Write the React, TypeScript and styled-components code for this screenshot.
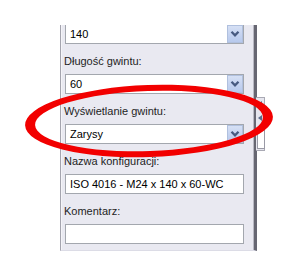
import React from 'react';
import styled, {createGlobalStyle} from "styled-components";

const GlobalStyle = createGlobalStyle`
  html, body {
    margin: 0;
    padding: 0;
    background: #ffffff;
  }
  * {
    box-sizing: border-box;
  }
`

const Page = styled.div`
  position: relative;
  width: 294px;
  height: 274px;
  overflow: hidden;
  background: #ffffff;
  padding-top: 25px;
  padding-left: 60px;
`

const Panel = styled.div`
  width: 197px;
  height: 226px;
  overflow: hidden;
  background: #e9e9f1;
  border-left: 1px solid #a4a4ae;
  border-right: 3px solid #676772;
  border-bottom: 1px solid #dcdce6;
  box-shadow: inset 1px 0 0 #f4f4f8, inset -1px 0 0 #b9b9c3;
  padding: 0 10px 0 4px;
  display: flex;
  flex-direction: column;
  font-family: "Liberation Sans", Arial, sans-serif;
  font-size: 11px;
  color: #1e1e1e;
`

const Label = styled.div`
  margin-left: -1px;
  padding-top: 10px;
  height: 30px;
  line-height: 14px;
`

const Field = styled.div<{$first?: boolean, $combo?: boolean}>`
  flex: none;
  height: 20px;
  margin-top: ${p => (p.$first ? '-1px' : '0')};
  background: #ffffff;
  border: 1px solid #a3a7ae;
  display: flex;
  align-items: center;
  padding-left: 4px;
  padding-right: ${p => (p.$combo ? '0' : '4px')};
  color: #000000;
`

const FieldText = styled.span`
  flex: 1;
  white-space: nowrap;
`

const DropButton = styled.div`
  flex: none;
  width: 16px;
  height: 18px;
  background: linear-gradient(#d6e0f5, #b7c9ed);
  border: 1px solid #b0c0de;
  display: flex;
  align-items: center;
  justify-content: center;
`

const Handle = styled.div`
  position: absolute;
  left: 256px;
  top: 97px;
  width: 9px;
  height: 54px;
  background: #e6e6ee;
  border: 1px solid #a9a9b4;
  border-left: none;
  display: flex;
  flex-direction: column;
  align-items: center;
  padding-top: 3px;
  gap: 8px;
`

const HandleArrow = styled.div`
  width: 0;
  height: 0;
  border-top: 3px solid transparent;
  border-bottom: 3px solid transparent;
  border-right: 4px solid #5a6a8a;
`

const HandleBox = styled.div`
  width: 8px;
  height: 20px;
  background: #ffffff;
  border: 1px solid #9a9aa6;
  margin-left: 1px;
`

const Overlay = styled.svg`
  position: absolute;
  left: 0;
  top: 0;
  pointer-events: none;
`

const Chevron: React.FC = () => (
    <svg width="10" height="8" viewBox="0 0 10 8">
        <polyline points="1.5,1.8 5,5.3 8.5,1.8" fill="none" stroke="#475a80" strokeWidth="2.3"/>
    </svg>
)

const Combo: React.FC<{value: string, first?: boolean}> = ({value, first}) => (
    <Field $first={first} $combo>
        <FieldText>{value}</FieldText>
        <DropButton><Chevron/></DropButton>
    </Field>
)

const App: React.FC = () => {
    return (
        <Page>
            <GlobalStyle/>
            <Panel>
                <Combo value="140" first/>
                <Label>Długość gwintu:</Label>
                <Combo value="60"/>
                <Label>Wyświetlanie gwintu:</Label>
                <Combo value="Zarysy"/>
                <Label>Nazwa konfiguracji:</Label>
                <Field><FieldText>ISO 4016 - M24 x 140 x 60-WC</FieldText></Field>
                <Label>Komentarz:</Label>
                <Field/>
            </Panel>
            <Handle>
                <HandleArrow/>
                <HandleArrow/>
                <HandleBox/>
            </Handle>
            <Overlay width="294" height="274" viewBox="0 0 294 274">
                <g transform="rotate(-2 149 121)">
                    <path
                        fillRule="evenodd"
                        fill="#f20000"
                        d="M25 121 a124 36 0 1 0 248 0 a124 36 0 1 0 -248 0 Z M35 121 a114 30 0 1 0 228 0 a114 30 0 1 0 -228 0 Z"
                    />
                </g>
            </Overlay>
        </Page>
    );
}

export default App;
